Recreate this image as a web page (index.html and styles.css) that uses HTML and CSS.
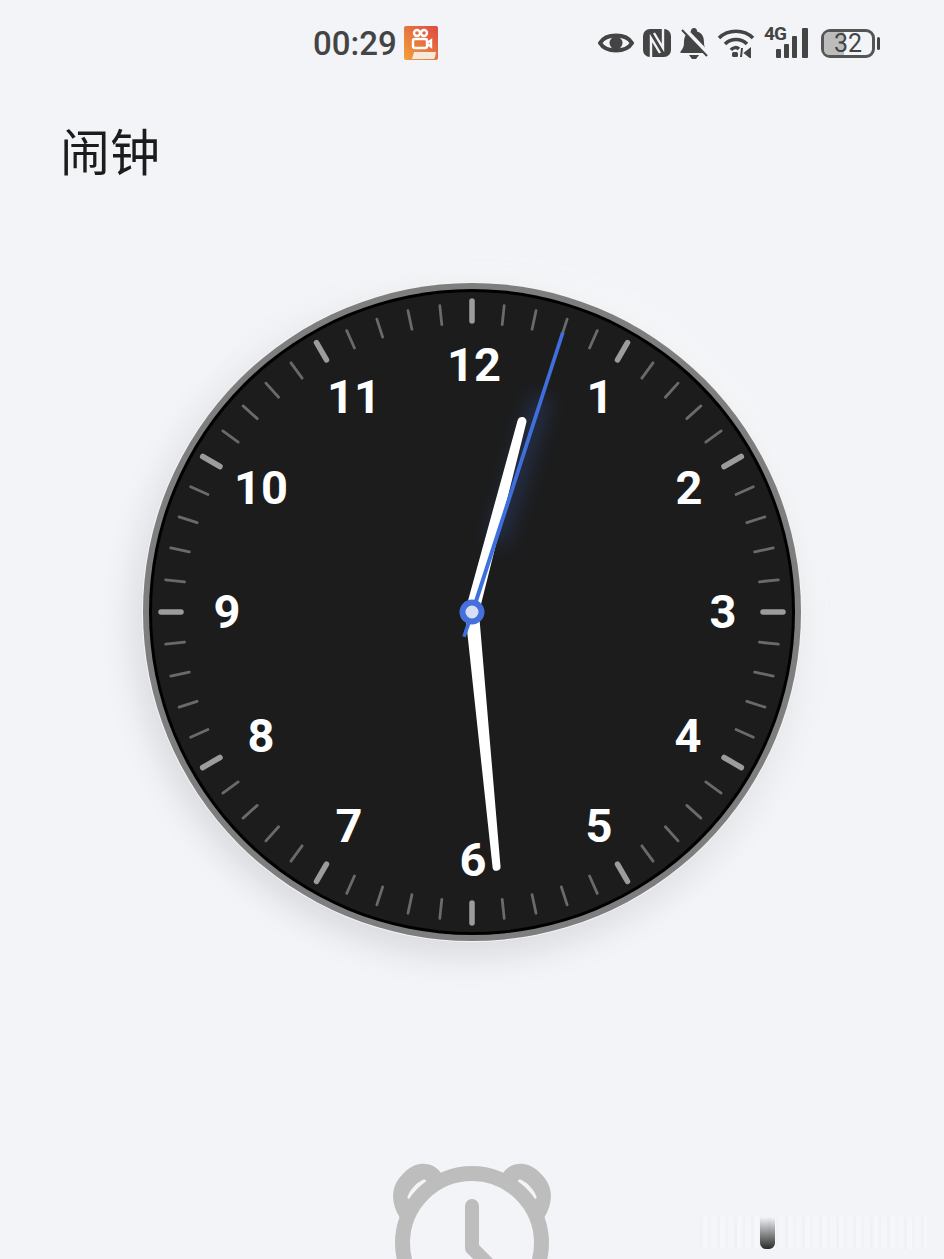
FILE: index.html
```html
<!DOCTYPE html>
<html lang="zh-CN">

  <head>
    <meta charset="UTF-8">
    <meta name="viewport" content="width=device-width, initial-scale=1.0">
    <title>闹钟</title>
    <link rel="stylesheet" href="styles.css">
  </head>

  <body>
    <div id="status-bar">
      <span class="time">00:29</span>
      <svg class="app-icon" width="34" height="34" viewBox="0 0 34 34">
        <defs>
          <linearGradient id="app-bg" x1="0" y1="1" x2="1" y2="0">
            <stop offset="0" stop-color="#f2a13a"/>
            <stop offset="1" stop-color="#dc4a44"/>
          </linearGradient>
        </defs>
        <rect width="34" height="34" rx="2" fill="url(#app-bg)"/>
        <g fill="none" stroke="#fff" stroke-width="2.4">
          <circle cx="13" cy="7" r="3"/>
          <circle cx="20" cy="7" r="3"/>
          <rect x="9" y="13" width="14" height="9" rx="2"/>
          <path d="M23 17l4-2.500v6L23 18"/>
        </g>
        <path d="M8 33l2-7h22l-1 5-1 2z" fill="#f6e8dc"/>
      </svg>

      <div class="status-icons">
        <svg width="36" height="24" viewBox="0 0 36 24">
          <path d="M2 12C8 2 28 2 34 12C28 22 8 22 2 12Z" fill="none" stroke="#444" stroke-width="4"/>
          <circle cx="18" cy="12" r="6.500" fill="#444"/>
        </svg>
        <svg width="28" height="28" viewBox="0 0 28 28">
          <rect width="28" height="28" rx="7" fill="#444"/>
          <g fill="none" stroke="#f2f4f8" stroke-width="2.400">
            <path d="M8 28V9L17 24"/>
            <path d="M20 0V19L11 4"/>
          </g>
        </svg>
        <svg width="28" height="31" viewBox="0 0 28 31">
          <path d="M14 0a3 3 0 0 1 3 3.500C23 5 24 10 24 15c0 4 1.500 6 3.500 8.500V25H.5v-1.500C2.500 21 4 19 4 15 4 10 5 5 11 3.500A3 3 0 0 1 14 0z" fill="#444"/>
          <path d="M9 27h10l-3 4h-4z" fill="#444"/>
          <path d="M3 0l25 26" stroke="#f2f4f8" stroke-width="5"/>
          <path d="M2 2l25 26" stroke="#444" stroke-width="2"/>
        </svg>
        <svg width="38" height="30" viewBox="0 0 38 30">
          <g fill="none" stroke="#444" stroke-width="3.500">
            <path d="M2 10C11 1 27 1 36 10"/>
            <path d="M8 16C14 10 24 10 30 16"/>
            <path d="M14 22C16 19 20 19 22 21"/>
          </g>
          <rect x="15" y="24" width="6" height="5" rx="1.500" fill="#444"/>
          <path d="M25 20l-1 9M33 21v8M28 25l5-4v8z" stroke="#444" stroke-width="2" fill="#444"/>
        </svg>
        <div class="signal">
          <span class="net">4G</span>
          <svg width="44" height="30" viewBox="0 0 44 30">
            <rect x="12" y="21" width="5" height="9" rx="1" fill="#444"/>
            <rect x="20" y="16" width="5" height="14" rx="1" fill="#444"/>
            <rect x="28" y="8" width="5" height="22" rx="1" fill="#444"/>
            <rect x="38" y="0" width="6" height="30" rx="1" fill="#444"/>
          </svg>
        </div>
        <div class="battery">
          <div class="battery-body"><div class="battery-fill"></div><span>32</span></div>
          <div class="battery-nub"></div>
        </div>
      </div>
    </div>

    <h1>闹钟</h1>

    <div id="clock">
      <svg width="660" height="660" viewBox="-330 -330 660 660">
        <defs>
          <line id="major" x1="0" y1="-311" x2="0" y2="-291" stroke="#9c9c9c" stroke-width="5.500" stroke-linecap="round"/>
          <line id="minor" x1="0" y1="-308" x2="0" y2="-289" stroke="#6a6a6a" stroke-width="2.800" stroke-linecap="round"/>
          <filter id="glow" x="-100%" y="-20%" width="300%" height="140%">
            <feGaussianBlur stdDeviation="10"/>
          </filter>
        </defs>

        <circle r="329" fill="#7e7e7e"/>
        <circle r="323" fill="#000"/>
        <circle r="320" fill="#1c1c1c"/>

        <!-- hour ticks -->
        <use href="#major"/>
        <use href="#major" transform="rotate(30)"/>
        <use href="#major" transform="rotate(60)"/>
        <use href="#major" transform="rotate(90)"/>
        <use href="#major" transform="rotate(120)"/>
        <use href="#major" transform="rotate(150)"/>
        <use href="#major" transform="rotate(180)"/>
        <use href="#major" transform="rotate(210)"/>
        <use href="#major" transform="rotate(240)"/>
        <use href="#major" transform="rotate(270)"/>
        <use href="#major" transform="rotate(300)"/>
        <use href="#major" transform="rotate(330)"/>

        <!-- minute ticks -->
        <use href="#minor" transform="rotate(6)"/>
        <use href="#minor" transform="rotate(12)"/>
        <use href="#minor" transform="rotate(18)"/>
        <use href="#minor" transform="rotate(24)"/>
        <use href="#minor" transform="rotate(36)"/>
        <use href="#minor" transform="rotate(42)"/>
        <use href="#minor" transform="rotate(48)"/>
        <use href="#minor" transform="rotate(54)"/>
        <use href="#minor" transform="rotate(66)"/>
        <use href="#minor" transform="rotate(72)"/>
        <use href="#minor" transform="rotate(78)"/>
        <use href="#minor" transform="rotate(84)"/>
        <use href="#minor" transform="rotate(96)"/>
        <use href="#minor" transform="rotate(102)"/>
        <use href="#minor" transform="rotate(108)"/>
        <use href="#minor" transform="rotate(114)"/>
        <use href="#minor" transform="rotate(126)"/>
        <use href="#minor" transform="rotate(132)"/>
        <use href="#minor" transform="rotate(138)"/>
        <use href="#minor" transform="rotate(144)"/>
        <use href="#minor" transform="rotate(156)"/>
        <use href="#minor" transform="rotate(162)"/>
        <use href="#minor" transform="rotate(168)"/>
        <use href="#minor" transform="rotate(174)"/>
        <use href="#minor" transform="rotate(186)"/>
        <use href="#minor" transform="rotate(192)"/>
        <use href="#minor" transform="rotate(198)"/>
        <use href="#minor" transform="rotate(204)"/>
        <use href="#minor" transform="rotate(216)"/>
        <use href="#minor" transform="rotate(222)"/>
        <use href="#minor" transform="rotate(228)"/>
        <use href="#minor" transform="rotate(234)"/>
        <use href="#minor" transform="rotate(246)"/>
        <use href="#minor" transform="rotate(252)"/>
        <use href="#minor" transform="rotate(258)"/>
        <use href="#minor" transform="rotate(264)"/>
        <use href="#minor" transform="rotate(276)"/>
        <use href="#minor" transform="rotate(282)"/>
        <use href="#minor" transform="rotate(288)"/>
        <use href="#minor" transform="rotate(294)"/>
        <use href="#minor" transform="rotate(306)"/>
        <use href="#minor" transform="rotate(312)"/>
        <use href="#minor" transform="rotate(318)"/>
        <use href="#minor" transform="rotate(324)"/>
        <use href="#minor" transform="rotate(336)"/>
        <use href="#minor" transform="rotate(342)"/>
        <use href="#minor" transform="rotate(348)"/>
        <use href="#minor" transform="rotate(354)"/>

        <g class="numerals">
          <text x="2" y="-248">12</text>
          <text x="128" y="-216">1</text>
          <text x="217" y="-125">2</text>
          <text x="251" y="-1">3</text>
          <text x="216" y="123">4</text>
          <text x="127" y="213">5</text>
          <text x="1" y="247">6</text>
          <text x="-123" y="213">7</text>
          <text x="-211" y="123">8</text>
          <text x="-245" y="-1">9</text>
          <text x="-211" y="-125">10</text>
          <text x="-118" y="-216">11</text>
        </g>

        <!-- hands -->
        <line x1="25" y1="-70" x2="70" y2="-215" stroke="#3f6fe0" stroke-width="16" opacity="0.28" filter="url(#glow)"/>
        <path d="M-7 10L-4.500 -197A4.500 4.500 0 0 1 4.500 -197L7 10Z" fill="#fff" transform="rotate(14.700)"/>
        <path d="M-7 -10L-4 256A4 4 0 0 0 4 256L7 -10Z" fill="#fff" transform="rotate(-5.500)"/>
        <path d="M-1.500 0L-1.800 -294L1.800 -294L2.500 0L1.800 26L-1.800 26Z" fill="#3f6fdc" transform="rotate(18)"/>
        <circle r="9.500" fill="#d9dff2" stroke="#456fdb" stroke-width="6"/>
      </svg>
    </div>

    <div id="footer">
      <div></div>
      <svg class="alarm" width="160" height="99" viewBox="0 0 160 99">
        <defs>
          <g id="ear">
            <path d="M8 58C-2 42 -1 26 10 15C18 6 26 3 33 4C41 4 47 9 51 16L30 40Z" fill="#bdbdbd"/>
            <path d="M18 37C21 30 26 25 32 22" fill="none" stroke="#f2f4f8" stroke-width="5" stroke-linecap="round"/>
          </g>
        </defs>
        <use href="#ear"/>
        <use href="#ear" transform="translate(160 0) scale(-1 1)"/>
        <g fill="none" stroke="#bdbdbd" stroke-linejoin="round">
          <circle cx="80" cy="83" r="69.500" stroke-width="15"/>
          <path d="M80 46V88L112 120" stroke-width="14" stroke-linecap="round"/>
        </g>
      </svg>
      <div class="home-bar"><div class="home-thumb"></div></div>
    </div>
  </body>

</html>
```

FILE: styles.css
```css
html, body {
  margin: 0;
  height: 1259px;
  overflow: hidden;
}

body {
  background-color: #f2f4f8;
  font-family: Roboto, "Noto Sans CJK SC", sans-serif;
  display: flex;
  flex-direction: column;
}

#status-bar {
  height: 86px;
  display: flex;
  align-items: center;
  padding-left: 313px;
  padding-right: 64px;
  color: #444;
}

.time {
  font-size: 33px;
  font-weight: 500;
}

.app-icon {
  margin-left: 7px;
}

.status-icons {
  margin-left: auto;
  display: flex;
  align-items: center;
  gap: 9px;
}

.signal {
  position: relative;
  width: 44px;
  height: 30px;
}

.net {
  position: absolute;
  top: -6px;
  left: 0;
  font-size: 19px;
  font-weight: 700;
  letter-spacing: -1px;
}

.battery {
  display: flex;
  align-items: center;
  gap: 2px;
  margin-left: 4px;
}

.battery-body {
  position: relative;
  width: 54px;
  height: 29px;
  box-sizing: border-box;
  border: 3px solid #555;
  border-radius: 9px;
  display: flex;
  align-items: center;
  justify-content: center;
  font-size: 25px;
  line-height: 23px;
}

.battery-fill {
  position: absolute;
  left: 0;
  top: 0;
  bottom: 0;
  width: 42%;
  border-radius: 5px 0 0 5px;
  background-color: #bcbcbc;
}

.battery-body span {
  position: relative;
}

.battery-nub {
  width: 3px;
  height: 13px;
  border-radius: 2px;
  background-color: #444;
}

h1 {
  margin: 28px 0 0 60px;
  height: 70px;
  font-family: "Noto Sans CJK SC", sans-serif;
  font-size: 50px;
  font-weight: 400;
  line-height: 70px;
  color: #1c1c1c;
}

#clock {
  margin: 98px auto 0;
  width: 660px;
  height: 660px;
  border-radius: 50%;
  box-shadow: -5px 10px 38px rgba(0, 0, 0, 0.13), 8px -8px 30px rgba(255, 255, 255, 0.8);
}

#clock svg {
  display: block;
}

.numerals text {
  fill: #fff;
  font-family: Roboto, sans-serif;
  font-size: 47px;
  font-weight: 700;
  text-anchor: middle;
  dominant-baseline: central;
}

#footer {
  margin-top: 218px;
  display: grid;
  grid-template-columns: 1fr 160px 1fr;
}

.alarm {
  display: block;
}

.home-bar {
  position: relative;
  margin: 57px 17px 0 148px;
  height: 32px;
  background-image: repeating-linear-gradient(90deg, rgba(228, 231, 235, 0.2) 0 3px, rgba(255, 255, 255, 0.3) 3px 8px, rgba(235, 238, 242, 0.15) 8px 11px, rgba(250, 251, 252, 0.25) 11px 17px);
}

.home-thumb {
  position: absolute;
  left: 60px;
  top: 0;
  bottom: 0;
  width: 15px;
  border-radius: 0 0 6px 6px;
  background-image: linear-gradient(rgba(60, 60, 60, 0), #2a2a2a);
}
```
